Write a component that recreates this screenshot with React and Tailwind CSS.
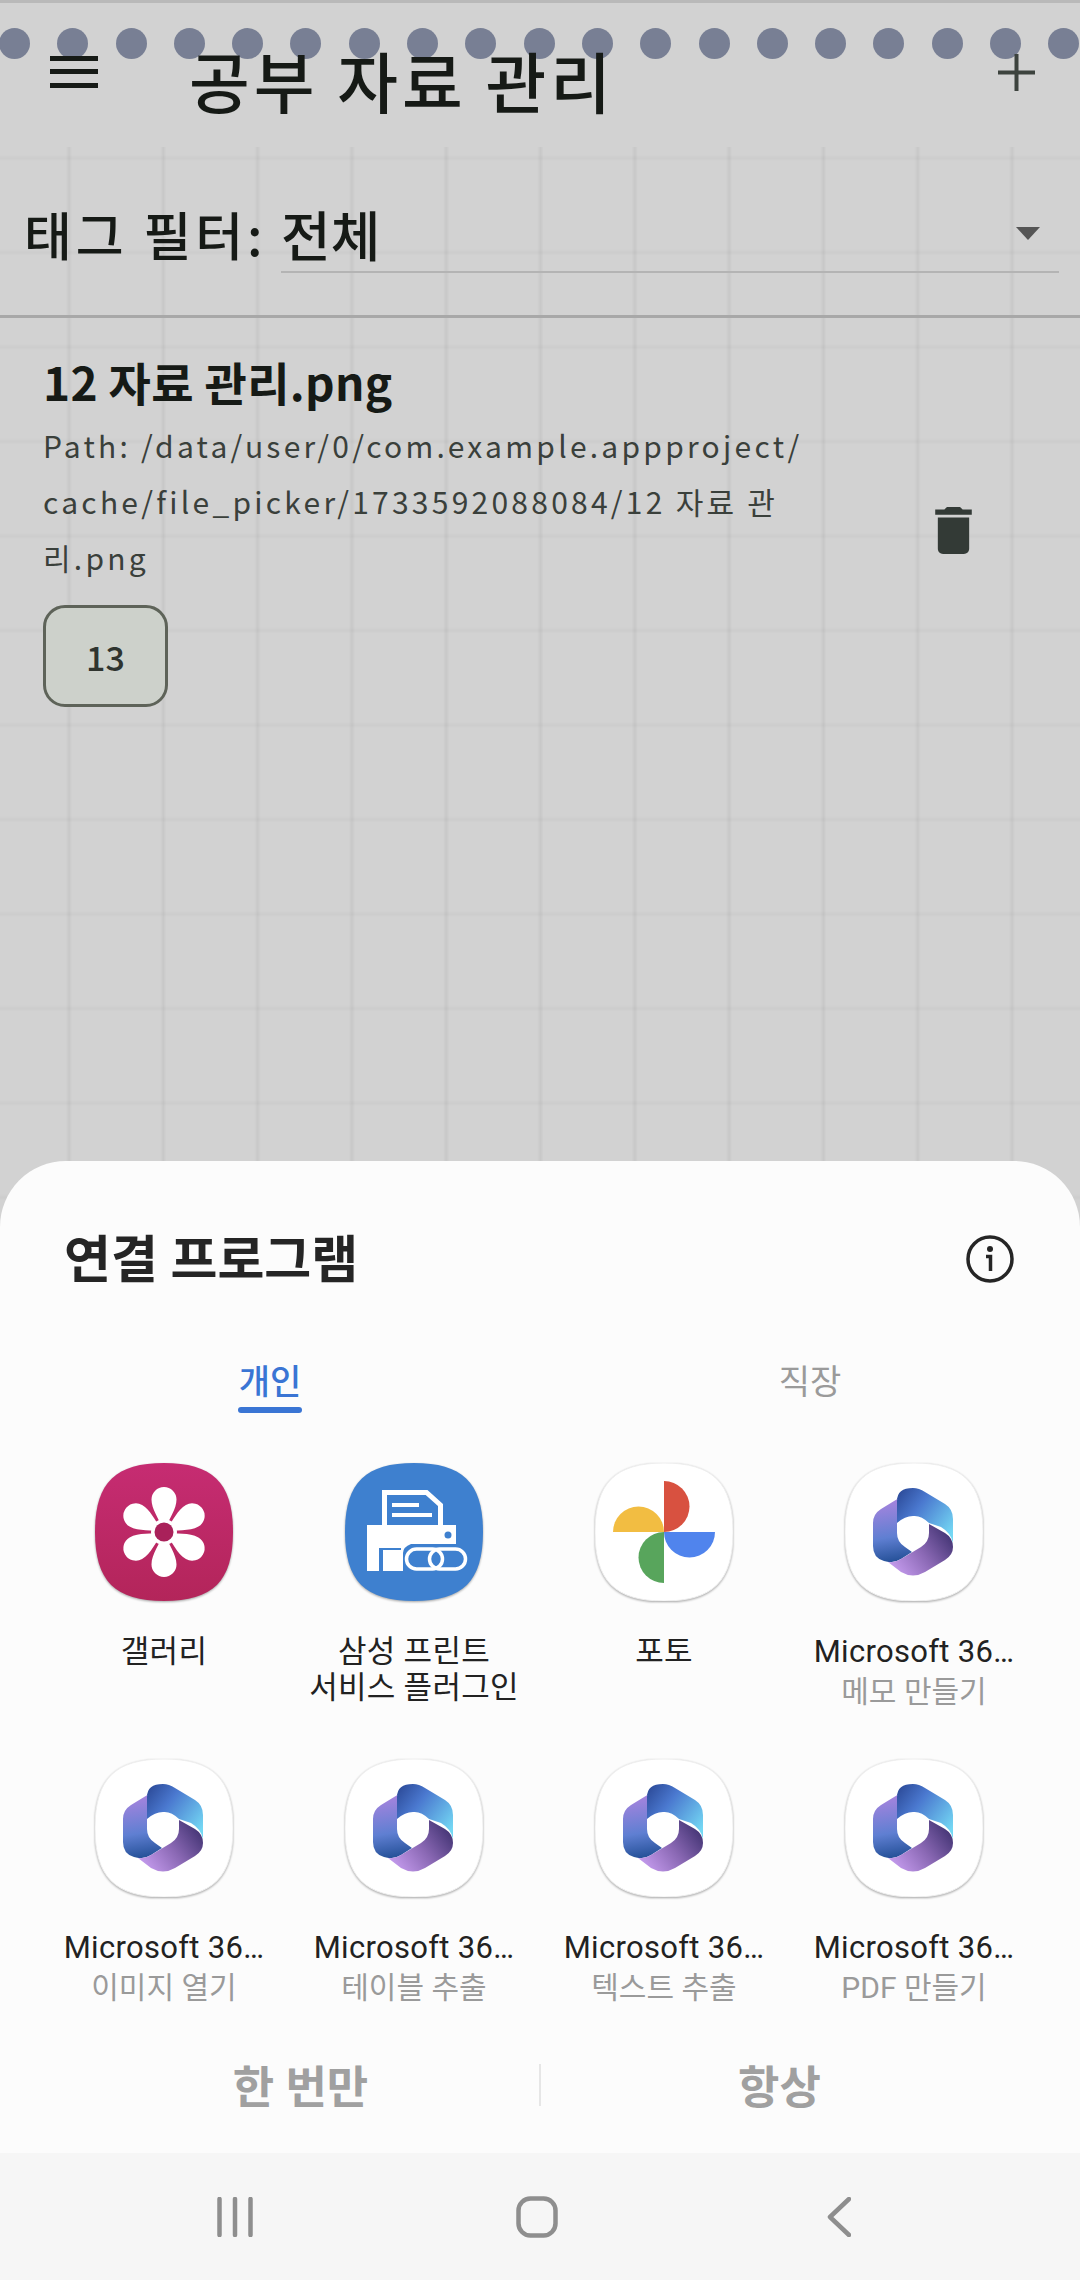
const hand = "font-['Noto_Sans_CJK_KR',sans-serif]";
const ui = "font-['Roboto','Noto_Sans_CJK_KR',sans-serif]";

const squircle = 'M69 0C118 0 138 20 138 69C138 118 118 138 69 138C20 138 0 118 0 69C0 20 20 0 69 0Z';

function Tile({ fill = '#ffffff', outlined, children }) {
  return (
    <svg viewBox="0 0 138 138" className="w-[138px] h-[138px] drop-shadow-[0_1px_1px_rgba(0,0,0,0.35)]">
      <path d={squircle} fill={fill} stroke={outlined ? '#eeeeee' : 'none'} strokeWidth="1" />
      {children}
    </svg>
  );
}

function GalleryIcon() {
  return (
    <Tile fill="url(#galleryBg)">
      <defs>
        <linearGradient id="galleryBg" x1="0" y1="0" x2="0" y2="1">
          <stop offset="0" stopColor="#c62c72" />
          <stop offset="1" stopColor="#b3255a" />
        </linearGradient>
      </defs>
      {[0, 60, 120, 180, 240, 300].map((r) => (
        <path
          key={r}
          transform={`rotate(${r} 69 69)`}
          d="M69 69C65 57 56.5 47 56.5 36.5A12.5 12.5 0 0 1 81.5 36.5C81.5 47 73 57 69 69Z"
          fill="#ffffff"
        />
      ))}
      <circle cx="69" cy="69" r="13" fill="#ffffff" />
      <circle cx="69" cy="69" r="9.5" fill="#a9215a" />
    </Tile>
  );
}

function PrintIcon() {
  return (
    <Tile fill="#3e80cf">
      <path d="M39.5 62V29.5H81.5L95.5 42V62" fill="none" stroke="#ffffff" strokeWidth="5" />
      <rect x="47" y="40" width="27" height="4" fill="#ffffff" />
      <rect x="47" y="50" width="40" height="4" fill="#ffffff" />
      <path d="M22 62H111V81H66Q58 84 58 90V108H22Z" fill="#ffffff" />
      <rect x="34" y="85" width="22" height="23" fill="#3e80cf" />
      <rect x="38" y="87" width="18" height="21" fill="#ffffff" />
      <circle cx="103" cy="72" r="3.5" fill="#3e80cf" />
      <rect x="58" y="82" width="42" height="28" rx="14" fill="#3e80cf" />
      <rect x="61.5" y="86" width="36" height="20" rx="10" fill="none" stroke="#ffffff" strokeWidth="3.5" />
      <rect x="84.5" y="86" width="36" height="20" rx="10" fill="none" stroke="#ffffff" strokeWidth="3.5" />
    </Tile>
  );
}

function PhotosIcon() {
  return (
    <Tile outlined>
      <path d="M69 18A25.5 25.5 0 0 1 69 69Z" fill="#d85140" />
      <path d="M18 69A25.5 25.5 0 0 1 69 69Z" fill="#f2bd42" />
      <path d="M120 69A25.5 25.5 0 0 1 69 69Z" fill="#5084ed" />
      <path d="M69 120A25.5 25.5 0 0 1 69 69Z" fill="#58a55c" />
    </Tile>
  );
}

function OfficeIcon() {
  return (
    <Tile outlined>
      <defs>
        <linearGradient id="msTop" x1="0.05" y1="0.1" x2="1" y2="0.8">
          <stop offset="0" stopColor="#2f4f9e" />
          <stop offset="0.35" stopColor="#4a78cf" />
          <stop offset="1" stopColor="#74d8f4" />
        </linearGradient>
        <linearGradient id="msLeft" x1="0.5" y1="0" x2="0.6" y2="1">
          <stop offset="0" stopColor="#a884de" />
          <stop offset="0.6" stopColor="#5f7fd2" />
          <stop offset="1" stopColor="#234f96" />
        </linearGradient>
        <linearGradient id="msBottom" x1="0" y1="0.8" x2="1" y2="0.2">
          <stop offset="0" stopColor="#c79df0" />
          <stop offset="0.5" stopColor="#8a68b4" />
          <stop offset="1" stopColor="#3f3170" />
        </linearGradient>
      </defs>
      <path
        d="M54 35L36 46Q28 51 28 60V83Q28 95 39 98Q48 101 56 96L67 89L60 84Q52 79 52 70V35Z"
        fill="url(#msLeft)"
      />
      <path
        d="M52 60V38Q52 25 68 25Q74 25 80 29L100 41Q108 46 108 56V80Q106 70 96 64L84 60Q76 52 68 53Q60 53 52 60Z"
        fill="url(#msTop)"
      />
      <path
        d="M84 61L100 70Q108 75 108 84Q108 92 100 97L80 109Q68 116 56 109L43 99Q50 100 56 96L76 84Q84 79 84 70Z"
        fill="url(#msBottom)"
      />
    </Tile>
  );
}

const apps = [
  { icon: <GalleryIcon />, lines: ['갤러리'] },
  { icon: <PrintIcon />, lines: ['삼성 프린트', '서비스 플러그인'] },
  { icon: <PhotosIcon />, lines: ['포토'] },
  { icon: <OfficeIcon />, lines: ['Microsoft 36…'], sub: '메모 만들기' },
  { icon: <OfficeIcon />, lines: ['Microsoft 36…'], sub: '이미지 열기' },
  { icon: <OfficeIcon />, lines: ['Microsoft 36…'], sub: '테이블 추출' },
  { icon: <OfficeIcon />, lines: ['Microsoft 36…'], sub: '텍스트 추출' },
  { icon: <OfficeIcon />, lines: ['Microsoft 36…'], sub: 'PDF 만들기' },
];

function AppCell({ app }) {
  return (
    <div className="h-[296px] flex flex-col items-center">
      {app.icon}
      <div className="mt-[33px] text-[31px] leading-[36px] tracking-[0.3px] text-[#222222] text-center whitespace-nowrap">
        {app.lines.map((l) => (
          <div key={l}>{l}</div>
        ))}
      </div>
      {app.sub && (
        <div className="mt-[4px] text-[30px] leading-[36px] text-[#9a9a9a] whitespace-nowrap">{app.sub}</div>
      )}
    </div>
  );
}

export default function App() {
  return (
    <div className={`relative w-[1080px] h-[2280px] overflow-hidden bg-[#d2d2d2] ${hand}`}>
      {/* notebook holes */}
      <div className="absolute left-[-1px] top-[28px] flex gap-[27.3px]">
        {Array.from({ length: 19 }).map((_, i) => (
          <div key={i} className="w-[31px] h-[31px] rounded-full bg-[#787f94]" />
        ))}
      </div>

      <header className="relative h-[147px] border-t-[3px] border-[#b9b9b9] flex items-center pl-[50px] pr-[45px]">
        <svg viewBox="0 0 48 32" className="w-[48px] h-[32px] mt-[-6px]">
          <rect x="0" y="0" width="48" height="5" fill="#161a16" />
          <rect x="0" y="13" width="48" height="5" fill="#161a16" />
          <rect x="0" y="27" width="48" height="5" fill="#161a16" />
        </svg>
        <h1 className="ml-[91px] text-[66px] leading-[80px] tracking-[4px] font-medium text-[#161a16] mt-[8px]">
          공부 자료 관리
        </h1>
        <svg viewBox="0 0 37 37" className="ml-auto w-[37px] h-[37px] mt-[-6px]">
          <path d="M18.5 0V37M0 18.5H37" stroke="#3d433e" strokeWidth="4" />
        </svg>
      </header>

      <main className="h-[1100px] bg-[linear-gradient(90deg,transparent_44px,rgba(0,0,0,0.05)_47px,transparent_50px),linear-gradient(180deg,transparent_44px,rgba(0,0,0,0.025)_47px,transparent_50px)] bg-size-[94.3px_94.5px] bg-position-[22px_-36px]">
        <div className="pt-[56px] pl-[24px] pr-[21px] flex items-end">
          <div className="w-[257px] h-[70px] text-[52px] leading-[62px] tracking-[4px] font-medium text-[#161a16] whitespace-nowrap">
            태그 필터:
          </div>
          <div className="flex-1 h-[70px] border-b-2 border-[#b4b4b4] flex justify-between">
            <span className="text-[54px] leading-[62px] font-medium text-[#161a16]">전체</span>
            <svg viewBox="0 0 24 13" className="w-[24px] h-[13px] mt-[24px] mr-[19px]">
              <path d="M0 0H24L12 13Z" fill="#555555" />
            </svg>
          </div>
        </div>
        <div className="mt-[42px] border-t-[3px] border-[#a8a8a8]" />

        <div className="pt-[35px] pl-[43px] flex items-center">
          <div className="w-[892px]">
            <h2 className="text-[46px] leading-[56px] font-bold tracking-[0.3px] text-[#161a16]">12 자료 관리.png</h2>
            <div className="mt-[8px] text-[30px] leading-[56px] tracking-[3.25px] text-[#3a403b] whitespace-nowrap">
              <div>Path: /data/user/0/com.example.appproject/</div>
              <div>cache/file_picker/1733592088084/12 자료 관</div>
              <div>리.png</div>
            </div>
            <div className="mt-[20px] w-[125px] h-[102px] rounded-[22px] border-[3px] border-[#5e6359] bg-[#cdd1cb] flex items-center justify-center text-[34px] font-medium text-[#2f342f]">
              13
            </div>
          </div>
          <svg viewBox="5 3 14 18" className="w-[37px] h-[47px]">
            <path d="M6 19c0 1.1.9 2 2 2h8c1.1 0 2-.9 2-2V7H6v12zM19 4h-3.5l-1-1h-5l-1 1H5v2h14V4z" fill="#333a36" />
          </svg>
        </div>
      </main>

      {/* bottom sheet */}
      <section className={`absolute left-0 top-[1161px] w-[1080px] rounded-t-[66px] bg-[#fcfcfc] ${ui}`}>
        <div className="pt-[74px] pl-[64px] pr-[66px] flex items-center justify-between">
          <h3 className="text-[51px] leading-[48px] font-semibold text-[#252525] translate-y-[2px]">연결 프로그램</h3>
          <svg viewBox="0 0 48 48" className="w-[48px] h-[48px]">
            <circle cx="24" cy="24" r="22" fill="none" stroke="#252525" strokeWidth="3.5" />
            <circle cx="24" cy="14" r="3" fill="#252525" />
            <path d="M20 21.5H24.5V36" fill="none" stroke="#252525" strokeWidth="3.5" />
          </svg>
        </div>

        <div className="mt-[78px] grid grid-cols-2 text-[34px] leading-[42px] text-center">
          <div className="flex flex-col items-center">
            <span className="font-medium text-[#3a75d4]">개인</span>
            <div className="mt-[4px] w-[64px] h-[6px] rounded-full bg-[#3a75d4]" />
          </div>
          <span className="text-[#9a9a9a]">직장</span>
        </div>

        <div className="mt-[50px] pl-[39px] grid grid-cols-[repeat(4,250px)]">
          {apps.map((app, i) => (
            <AppCell key={i} app={app} />
          ))}
        </div>

        <div className="h-[98px] px-[62px] pt-[9px] flex items-start text-[45px] leading-[46px] font-semibold text-[#a0a0a0]">
          <button className="flex-1 pt-[2px]">한 번만</button>
          <div className="w-[2px] h-[42px] bg-[#e6e6e6]" />
          <button className="flex-1 pt-[2px]">항상</button>
        </div>

        <nav className="h-[127px] bg-[#f6f6f6] pl-[84px] grid grid-cols-[302px_302px_302px] items-center justify-items-center">
          <svg viewBox="0 0 36 40" className="w-[36px] h-[40px]">
            <path d="M2.5 2V38M18 2V38M33.5 2V38" stroke="#8e8e8e" strokeWidth="4.5" strokeLinecap="round" />
          </svg>
          <svg viewBox="0 0 42 42" className="w-[42px] h-[42px]">
            <rect x="2.5" y="2.5" width="37" height="37" rx="12" fill="none" stroke="#8e8e8e" strokeWidth="4.5" />
          </svg>
          <svg viewBox="0 0 24 40" className="w-[24px] h-[40px]">
            <path d="M22 2L3 20L22 38" fill="none" stroke="#8e8e8e" strokeWidth="4.5" strokeLinecap="round" strokeLinejoin="round" />
          </svg>
        </nav>
      </section>
    </div>
  );
}
